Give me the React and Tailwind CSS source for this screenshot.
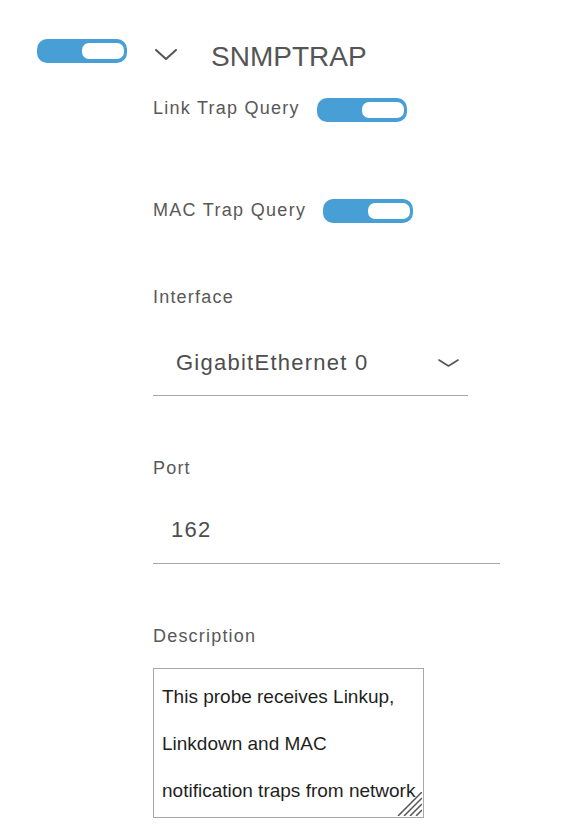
function Toggle() {
  return (
    <div className="w-[90px] h-[24px] rounded-[10px] bg-[#479fd6] flex items-center justify-end pr-[3px] shrink-0">
      <div className="w-[42px] h-[16px] rounded-[7px] bg-white" />
    </div>
  );
}

function Chevron({ className }) {
  return (
    <svg className={className} viewBox="0 0 22 11" fill="none">
      <path d="M1 1 L11 10 L21 1" stroke="#555" strokeWidth="2" strokeLinecap="round" strokeLinejoin="round" />
    </svg>
  );
}

export default function App() {
  return (
    <div className="w-[568px] h-[840px] bg-white overflow-hidden flex font-['Liberation_Sans',Arial,sans-serif]">
      {/* main switch */}
      <div className="ml-[37px] mt-[39px]">
        <Toggle />
      </div>

      <div className="ml-[26px] mt-[39px] flex flex-col">
        {/* header */}
        <div className="flex items-start">
          <Chevron className="w-[22px] h-[11px] ml-[2px] mt-[10px]" />
          <div className="ml-[34px] mt-[4px] text-[28px] leading-[28px] text-[#555]">SNMPTRAP</div>
        </div>

        {/* link trap */}
        <div className="flex items-start gap-[17px] mt-[27px]">
          <div className="mt-[1px] text-[18px] leading-[18px] tracking-[1.25px] text-[#585858]">Link Trap Query</div>
          <Toggle />
        </div>

        {/* mac trap */}
        <div className="flex items-start gap-[17px] mt-[77px]">
          <div className="mt-[2px] text-[18px] leading-[18px] tracking-[1.3px] text-[#585858]">MAC Trap Query</div>
          <Toggle />
        </div>

        {/* interface */}
        <div className="mt-[65px] text-[18px] leading-[18px] tracking-[1.2px] text-[#585858]">Interface</div>
        <div className="mt-[46px] w-[315px] pb-[21px] pl-[23px] pr-[9px] border-b border-[#a8a8a8] flex items-center justify-between">
          <span className="text-[22px] leading-[22px] tracking-[1.25px] text-[#4d4d4d]">GigabitEthernet 0</span>
          <svg className="w-[21px] h-[8px]" viewBox="0 0 21 8" fill="none">
            <path d="M1 1 L10.5 7 L20 1" stroke="#555" strokeWidth="1.6" strokeLinecap="round" strokeLinejoin="round" />
          </svg>
        </div>

        {/* port */}
        <div className="mt-[63px] text-[18px] leading-[18px] tracking-[1.2px] text-[#585858]">Port</div>
        <div className="mt-[42px] w-[347px] pb-[19px] pl-[18px] border-b border-[#a8a8a8]">
          <span className="text-[22px] leading-[22px] tracking-[1.25px] text-[#4d4d4d]">162</span>
        </div>

        {/* description */}
        <div className="mt-[63px] text-[18px] leading-[18px] tracking-[1.2px] text-[#585858]">Description</div>
        <div className="mt-[23px] w-[271px] h-[150px] border border-[#a8a8a8] relative overflow-hidden">
          <div className="mt-[4px] pl-[8px] text-[19px] leading-[47px] text-[#1f1f1f] whitespace-nowrap">
            <div>This probe receives Linkup,</div>
            <div>Linkdown and MAC</div>
            <div>notification traps from network</div>
          </div>
          <svg className="absolute right-[1px] bottom-[1px] w-[26px] h-[24px]" viewBox="0 0 26 24" fill="none">
            <path d="M2 24 L26 0 M8 24 L26 6 M14 24 L26 12 M20 24 L26 18" stroke="#555" strokeWidth="1.5" />
          </svg>
        </div>
      </div>
    </div>
  );
}
